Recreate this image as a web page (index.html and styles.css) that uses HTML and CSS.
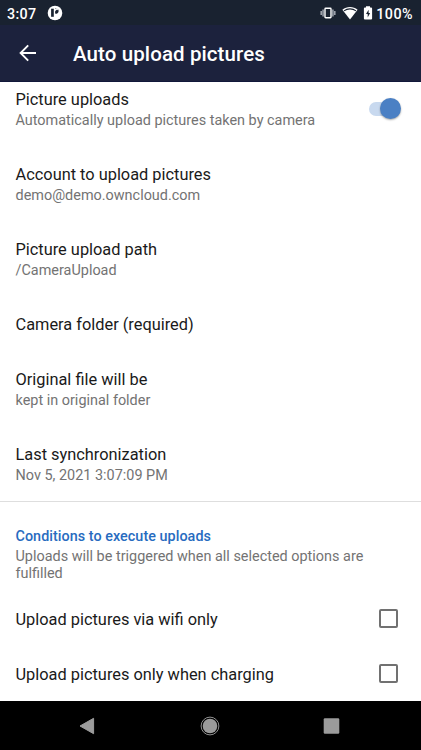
FILE: index.html
```html
<!DOCTYPE html>
<html lang="en">
<head>
<meta charset="utf-8">
<title>Auto upload pictures</title>
<link rel="stylesheet" href="styles.css">
</head>
<body>
<div class="screen">
  <header class="status">
    <span class="clock">3:07</span>
    <svg class="notification" width="16" height="16" viewBox="0 0 16 16"><circle cx="8" cy="8" r="7.3" fill="#fff"/><path d="M4.1 3.7h2.7v8.1H4.1z" fill="#192230"/><path d="M8.1 3.2A2.8 2.8 0 1 1 8.1 8.6V6.6L9.6 4.3z" fill="#192230"/><circle cx="10" cy="4.1" r="1.1" fill="#fff"/></svg>
    <div class="indicators">
      <svg width="16" height="14" viewBox="0 0 16 14"><path d="M1.2 5v4M3.1 3.6v6.8M12.9 3.6v6.8M14.8 5v4" stroke="#a5aab3" stroke-width="1.5"/><rect x="5" y="2.3" width="6" height="9.4" rx=".7" fill="none" stroke="#fff" stroke-width="1.4"/></svg>
      <svg class="wifi" width="16" height="14" viewBox="0 0 16 14"><path d="M8 13.4L.4 3.8C4.7.1 11.3.1 15.6 3.8z" fill="#fff"/><path d="M2 4.9C5.5 2.2 10.5 2.2 14 4.9" fill="none" stroke="#192230" stroke-width="1.1"/></svg>
      <svg class="battery" width="10" height="14" viewBox="0 0 10 14"><path d="M3 .3h4v1.3h1.1q1 0 1 1v10q0 1-1 1H1.9q-1 0-1-1v-10q0-1 1-1H3z" fill="#fff"/><path d="M5.6 3.7L3 8.1h1.7v3.3L7.1 7H5.6z" fill="#192230"/></svg>
      <span class="percent">100%</span>
    </div>
  </header>
  <div class="appbar">
    <svg class="back" width="18" height="18" viewBox="0 0 18 18"><path d="M17 9H2M9.2 1.4L1.6 9l7.6 7.6" fill="none" stroke="#fff" stroke-width="1.9"/></svg>
    <h1>Auto upload pictures</h1>
  </div>
  <main>
    <section class="list">
      <div class="row first">
        <div><div class="title">Picture uploads</div><div class="summary">Automatically upload pictures taken by camera</div></div>
        <div class="switch"><div class="thumb"></div></div>
      </div>
      <div class="row"><div><div class="title">Account to upload pictures</div><div class="summary">demo@demo.owncloud.com</div></div></div>
      <div class="row"><div><div class="title">Picture upload path</div><div class="summary">/CameraUpload</div></div></div>
      <div class="row"><div class="title">Camera folder (required)</div></div>
      <div class="row"><div><div class="title">Original file will be</div><div class="summary">kept in original folder</div></div></div>
      <div class="row last"><div><div class="title">Last synchronization</div><div class="summary">Nov 5, 2021 3:07:09 PM</div></div></div>
    </section>
    <section class="conditions">
      <h2>Conditions to execute uploads</h2>
      <p>Uploads will be triggered when all selected options are fulfilled</p>
      <div class="row option"><div class="title">Upload pictures via wifi only</div><div class="checkbox"></div></div>
      <div class="row option"><div class="title">Upload pictures only when charging</div><div class="checkbox"></div></div>
    </section>
  </main>
  <nav>
    <svg width="16" height="18" viewBox="0 0 16 18"><path d="M14.6 1.3v15.4L1 9z" fill="#9b9b9b" stroke="#9b9b9b" stroke-width="1" stroke-linejoin="round"/></svg>
    <svg class="home" width="20" height="20" viewBox="0 0 20 20"><circle cx="10" cy="10" r="8.9" fill="none" stroke="#a0a0a0" stroke-width=".9"/><circle cx="10" cy="10" r="7.3" fill="#9b9b9b"/></svg>
    <svg width="17" height="16" viewBox="0 0 17 16"><rect x=".7" y=".2" width="15.6" height="15.6" rx="1.2" fill="#9b9b9b"/></svg>
  </nav>
</div>
</body>
</html>
```
FILE: styles.css
```css
* { box-sizing: border-box; }
body { margin: 0; font-family: Roboto, sans-serif; background: #fff; }
svg { display: block; }
.screen { width: 421px; height: 750px; display: flex; flex-direction: column; overflow: hidden; }
.status { flex: none; height: 25px; background: #192230; color: #fff; display: flex; align-items: center; padding: 0 8px 0 7px; font-size: 14.3px; font-weight: 500; line-height: 24px; }
.clock { width: 40px; letter-spacing: .3px; padding-top: 2px; }
.indicators { margin-left: auto; display: flex; align-items: center; }
.wifi { margin-left: 6px; }
.battery { margin-left: 5px; margin-right: 3px; }
.percent { letter-spacing: .45px; padding-top: 2px; }
.appbar { flex: none; height: 57px; background: #1c223d; border-bottom: 1px solid #11183a; color: #fff; display: flex; align-items: center; padding: 0 19px; }
h1 { margin: 2px 0 0 36px; font-size: 20.5px; line-height: 28px; font-weight: 500; letter-spacing: .1px; white-space: nowrap; }
main { height: 619px; flex: none; overflow: hidden; }
.list { border-bottom: 1px solid #dedede; }
.row { display: flex; align-items: flex-start; justify-content: space-between; padding: 17px 20px 16px 15.5px; }
.row.first { padding-top: 7px; }
.row.last { padding-bottom: 15px; }
.title { font-size: 16.36px; line-height: 21px; color: #1a1a1a; white-space: nowrap; }
.row > .title { height: 22px; }
.summary, p { font-size: 14.43px; color: #737373; }
.summary { line-height: 21px; white-space: nowrap; }
.switch { width: 32px; height: 21px; margin-top: 9px; display: flex; align-items: center; }
.switch::before { content: ""; width: 28px; height: 14px; border-radius: 7px; background: #c8d9ef; flex: none; }
.thumb { width: 21px; height: 21px; flex: none; margin-left: -17px; border-radius: 50%; background: #4b80c4; box-shadow: 0 1px 2px rgba(0,0,0,.35); }
h2 { margin: 0; padding: 25px 15.5px 0; font-size: 14.35px; line-height: 20px; font-weight: 500; letter-spacing: .05px; color: #276bc0; }
p { margin: 0; padding: 1px 15.5px 0; line-height: 17px; height: 45px; width: 400px; }
.option { height: 55px; padding: 0 23px 0 15.5px; align-items: center; }
.option > .title { height: 21px; }
.checkbox { width: 19px; height: 19px; border: 2px solid #717171; border-radius: 2px; margin-top: -2px; }
nav { flex: none; height: 49px; background: #000; display: flex; align-items: center; justify-content: space-between; padding: 0 81px 0 79px; }
.home { margin-left: 2px; }
```
